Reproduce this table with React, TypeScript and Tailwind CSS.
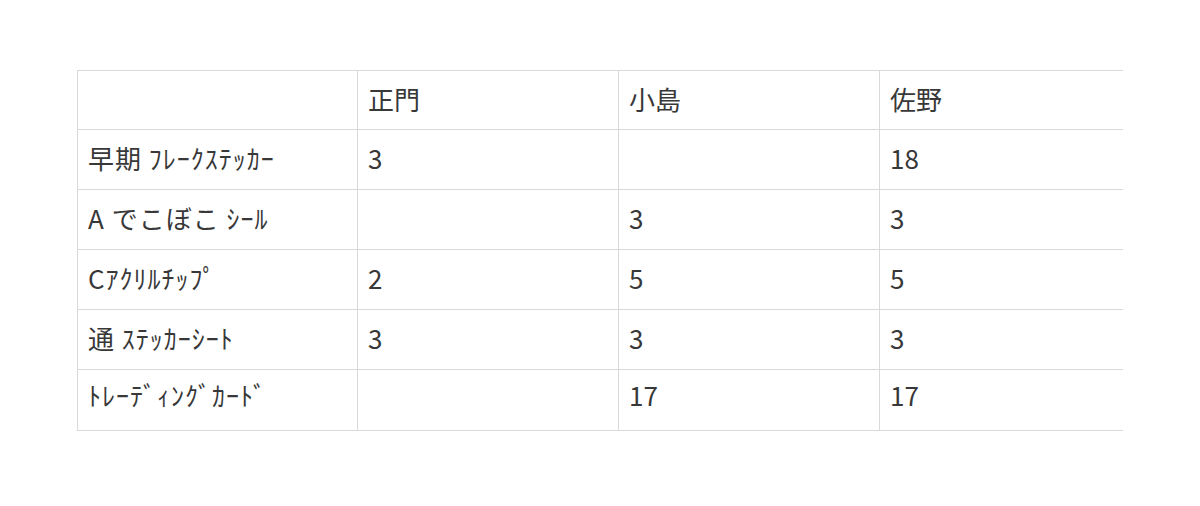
const header = ["", "正門", "小島", "佐野"];

const rows: string[][] = [
  ["早期 ﾌﾚｰｸｽﾃｯｶｰ", "3", "", "18"],
  ["A でこぼこ ｼｰﾙ", "", "3", "3"],
  ["Cｱｸﾘﾙﾁｯﾌﾟ", "2", "5", "5"],
  ["通 ｽﾃｯｶｰｼｰﾄ", "3", "3", "3"],
  ["ﾄﾚｰﾃﾞｨﾝｸﾞｶｰﾄﾞ", "", "17", "17"],
];

const widths = ["w-[280px]", "w-[261px]", "w-[261px]", "w-[243px]"];

export default function App() {
  return (
    <div className="min-h-[506px] w-[1200px] bg-white pl-[77px] pt-[70px] font-['Noto_Sans_CJK_JP','Noto_Sans',sans-serif] text-[#383838]">
      <table className="table-fixed border-collapse text-[26px] leading-none">
        <thead>
          <tr className="h-[59px]">
            {header.map((h, i) => (
              <th
                key={i}
                className={`${widths[i]} border border-[#d9d9d9] px-[10px] pb-[2px] text-left align-middle font-normal ${i === 3 ? "border-r-0" : ""}`}
              >
                {h}
              </th>
            ))}
          </tr>
        </thead>
        <tbody>
          {rows.map((row, r) => (
            <tr key={r} className={r === 4 ? "h-[61px]" : "h-[60px]"}>
              {row.map((cell, i) => (
                <td
                  key={i}
                  className={`border border-[#d9d9d9] px-[10px] text-left font-normal ${r === 4 ? "align-top pt-[12px]" : "align-middle pb-[3px]"} ${i === 0 ? "tracking-[1px]" : ""} ${i === 3 ? "border-r-0" : ""}`}
                >
                  {cell}
                </td>
              ))}
            </tr>
          ))}
        </tbody>
      </table>
    </div>
  );
}
